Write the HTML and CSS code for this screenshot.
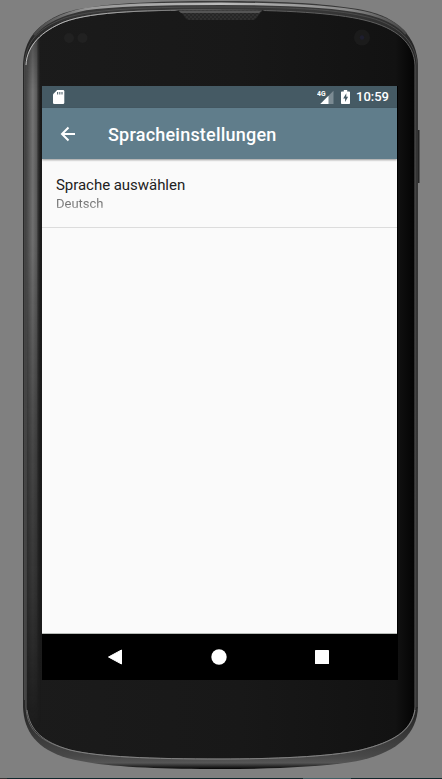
FILE: index.html
```html
<!DOCTYPE html>
<html lang="de">
<head>
<meta charset="utf-8">
<title>Spracheinstellungen</title>
<link rel="stylesheet" href="styles.css">
</head>
<body>
<div class="phone">
  <svg class="phone-body" viewBox="0 0 442 779" aria-hidden="true">
    <defs>
      <linearGradient id="rim" x2="0" y2="1">
        <stop offset="0" stop-color="#3b3b3b"/><stop offset=".06" stop-color="#252525"/>
        <stop offset=".93" stop-color="#292929"/><stop offset=".983" stop-color="#484848"/><stop offset=".992" stop-color="#555"/><stop offset="1" stop-color="#050505"/>
      </linearGradient>
      <linearGradient id="glass">
        <stop offset="0" stop-color="#1b1b1b"/><stop offset=".55" stop-color="#181818"/>
        <stop offset=".95" stop-color="#121212"/><stop offset="1" stop-color="#030303"/>
      </linearGradient>
      <linearGradient id="edge">
        <stop offset="0" stop-color="#444"/><stop offset=".45" stop-color="#747474"/>
        <stop offset=".7" stop-color="#5c5c5c"/><stop offset="1" stop-color="#1b1b1b" stop-opacity="0"/>
      </linearGradient>
      <linearGradient id="fade" x2="0" y2="1">
        <stop offset="0" stop-color="#fff" stop-opacity=".6"/><stop offset=".08" stop-color="#fff"/>
        <stop offset=".3" stop-color="#fff" stop-opacity=".95"/>
        <stop offset=".6" stop-color="#fff" stop-opacity=".5"/><stop offset=".8" stop-color="#fff" stop-opacity=".3"/>
        <stop offset="1" stop-color="#fff" stop-opacity="0"/>
      </linearGradient>
      <linearGradient id="topLine">
        <stop offset="0" stop-color="#444"/><stop offset=".15" stop-color="#999"/>
        <stop offset=".5" stop-color="#bbb"/><stop offset=".85" stop-color="#888"/><stop offset="1" stop-color="#444"/>
      </linearGradient>
      <linearGradient id="innerLine">
        <stop offset="0" stop-color="#bbb"/><stop offset=".4" stop-color="#aaa"/><stop offset="1" stop-color="#555"/>
      </linearGradient>
      <mask id="edgeMask"><rect x="20" y="35" width="30" height="695" fill="url(#fade)"/></mask>
      <clipPath id="glassClip"><path d="M26 65C27 45 42 31 64 22C93 11 150 10 221 10C285 10 335 13 364 20C398 28 414 44 415 65V707C414 731 393 742 361 750C329 757 270 759 221 759C150 759 99 757 70 750C41 742 27 731 26 707Z"/></clipPath>
      <pattern id="mesh" width="4" height="4" patternUnits="userSpaceOnUse">
        <rect width="4" height="4" fill="#303030"/><circle cx="1" cy="1" r=".8" fill="#181818"/><circle cx="3" cy="3" r=".8" fill="#181818"/>
      </pattern>
    </defs>
    <path fill="#252525" d="M417 130h2.500v53H417z"/>
    <path fill="url(#rim)" d="M23 65C24 40 36 24 64 13C95 3 155 1 221 1C285 1 331 4 363 10C398 17 417 37 418 65V707C417 733 399 751 362 760C329 767 270 769 221 769C155 769 100 767 67 758C37 749 24 732 23 707Z"/>
    <path fill="none" stroke="url(#topLine)" stroke-width="2.400" d="M34 35C44 22 61 14 86 9C122 4 173 3.800 221 3.800C280 3.800 332 6 364 12.500C384 17 398 24 406 34"/>
    <path fill="none" stroke="#555" stroke-width=".7" d="M24.500 700V65C25.500 42 38 28 65 18C95 8.500 155 7 221 7C285 7 333 9 363 16C398 23 416 42 417 65V707"/>
    <path fill="url(#glass)" stroke="#606060" stroke-width="1" d="M26 65C27 45 42 31 64 22C93 11 150 10 221 10C285 10 335 13 364 20C398 28 414 44 415 65V707C414 731 393 742 361 750C329 757 270 759 221 759C150 759 99 757 70 750C41 742 27 731 26 707Z"/>
    <g clip-path="url(#glassClip)"><rect x="26" y="20" width="15" height="735" fill="url(#edge)" mask="url(#edgeMask)"/></g>
    <path fill="none" stroke="url(#innerLine)" d="M26 65C27 45 42 31 64 22C93 11 150 10 221 10"/>
    <path fill="none" stroke="#8a8a8a" stroke-width=".8" d="M27 710C30 731 43 742 70 750C99 757 150 759 221 759C270 759 329 757 361 750C393 742 411 731 415 710"/>
    <path fill="url(#mesh)" d="M175 10h90q-4 1-7 6-2 4-6 4h-62q-4 0-6-4-3-5-9-6z"/>
    <path fill="#555" d="M178 10.500h84l-3 2.500h-78z"/>
    <circle cx="69" cy="38" r="5" fill="#212121"/><circle cx="82.500" cy="38" r="5" fill="#212121"/>
    <circle cx="362" cy="37.500" r="8" fill="#1b1b1b"/><circle cx="362" cy="37.500" r="2.200" fill="#1e1e2e"/>
  </svg>
  <main class="screen">
    <div class="status-bar">
      <svg class="sd" viewBox="0 0 12 14"><path fill="#fff" d="M4.200 0H10q1.300 0 1.300 1.300v11.400q0 1.300-1.300 1.300H1.300Q0 14 0 12.700V4.200z"/><path fill="#60717a" d="M4 2h1.200v2.500H4zm2.200 0h1.200v2.500H6.200zm2.200 0h1.200v2.500H8.400z"/></svg>
      <div class="status-icons">
        <svg class="signal" viewBox="0 0 17 14"><path fill="#7b8b93" d="M16.500.8V14H3.300z"/><path fill="#fff" d="M11.500 5.800V14H3.300z"/><path fill="#455a64" d="M0 0h9v7H0z"/><text x="0" y="6" textLength="8.500" lengthAdjust="spacingAndGlyphs">4G</text></svg>
        <svg class="battery" viewBox="0 0 9 14"><path fill="#fff" d="M2.800 0h3.400v1.400h2q.8 0 .8.800v11q0 .8-.8.800H.8q-.8 0-.8-.8v-11q0-.8.800-.8h2z"/><path fill="#455a64" d="M5.300 3.300 2.200 8.400h1.900v3.500l3-5.200H5.300z"/></svg>
        <span class="clock">10:59</span>
      </div>
    </div>
    <header class="app-bar">
      <svg class="back" viewBox="0 0 16 16"><path fill="none" stroke="#fff" stroke-width="2" d="M15 8H2M8.500 1.500 2 8l6.500 6.500"/></svg>
      <h1>Spracheinstellungen</h1>
    </header>
    <section class="preference">
      <div class="pref-title">Sprache auswählen</div>
      <div class="pref-value">Deutsch</div>
    </section>
    <div class="content"></div>
    <nav class="nav-bar">
      <svg viewBox="0 0 16 16"><path fill="#fff" stroke="#fff" stroke-linejoin="round" d="M14.500 1v14L1.500 8z"/></svg>
      <svg viewBox="0 0 16 16"><circle cx="8" cy="8" r="7.700" fill="#fff"/></svg>
      <svg viewBox="0 0 16 16"><rect x="1" y="1" width="14" height="14" rx=".6" fill="#fff"/></svg>
    </nav>
  </main>
</div>
<div class="taskbar"><span class="task-start"></span><span class="task-active"></span></div>
</body>
</html>
```
FILE: styles.css
```css
* { box-sizing: border-box; }
body {
  margin: 0;
  height: 779px;
  overflow: hidden;
  display: flex;
  flex-direction: column;
  background: #808080;
  font-family: Roboto, sans-serif;
}
svg { display: block; flex: none; }
.phone {
  position: relative;
  height: 778px;
  padding: 86px 44px 98px 42px;
}
.phone-body {
  position: absolute;
  top: 0;
  left: 0;
  width: 442px;
  height: 779px;
}
.screen {
  position: relative;
  width: 356px;
  height: 594px;
  display: flex;
  flex-direction: column;
  background: #fafafa;
  border-right: 1px solid #000;
}
.status-bar {
  height: 22px;
  flex: none;
  padding: 0 8px 0 11px;
  display: flex;
  align-items: center;
  justify-content: space-between;
  background: #455a64;
}
.sd { width: 12px; height: 14px; }
.status-icons { display: flex; align-items: center; }
.signal { width: 17px; height: 14px; margin-right: 7px; }
.signal text { font: 700 6.5px Roboto, sans-serif; fill: #fff; }
.battery { width: 9px; height: 14px; margin-right: 6px; }
.clock { font-size: 13px; font-weight: 500; line-height: 22px; color: #fff; }
.app-bar {
  height: 51px;
  flex: none;
  padding: 0 18px;
  display: flex;
  align-items: center;
  background: #607d8b;
  box-shadow: 0 1px 2px rgba(0, 0, 0, .4);
}
.back { width: 16px; height: 16px; margin-right: 32px; }
h1 { margin: 2px 0 0; font-size: 18px; font-weight: 500; line-height: 24px; letter-spacing: .22px; color: #fff; }
.preference {
  height: 69px;
  flex: none;
  padding: 17px 14px 0;
  border-bottom: 1px solid #dcdcdc;
}
.pref-title { font-size: 15px; line-height: 19px; letter-spacing: -.04px; color: #212121; }
.pref-value {
  font-size: 13px;
  line-height: 18px;
  color: transparent;
  background: linear-gradient(#737373 60%, #bbb 78%);
  background-clip: text;
  -webkit-background-clip: text;
}
.content { flex: 1; border-bottom: 1px solid #b8bcb8; }
.nav-bar {
  height: 46px;
  flex: none;
  padding: 0 67px 1px 65px;
  display: flex;
  align-items: center;
  justify-content: space-between;
  background: #000;
}
.nav-bar svg { width: 16px; height: 16px; }
.taskbar { height: 1px; display: flex; background: #10282c; }
.task-start { width: 7px; background: #333; }
.task-active { width: 48px; margin-left: 296px; background: #416064; }
```
